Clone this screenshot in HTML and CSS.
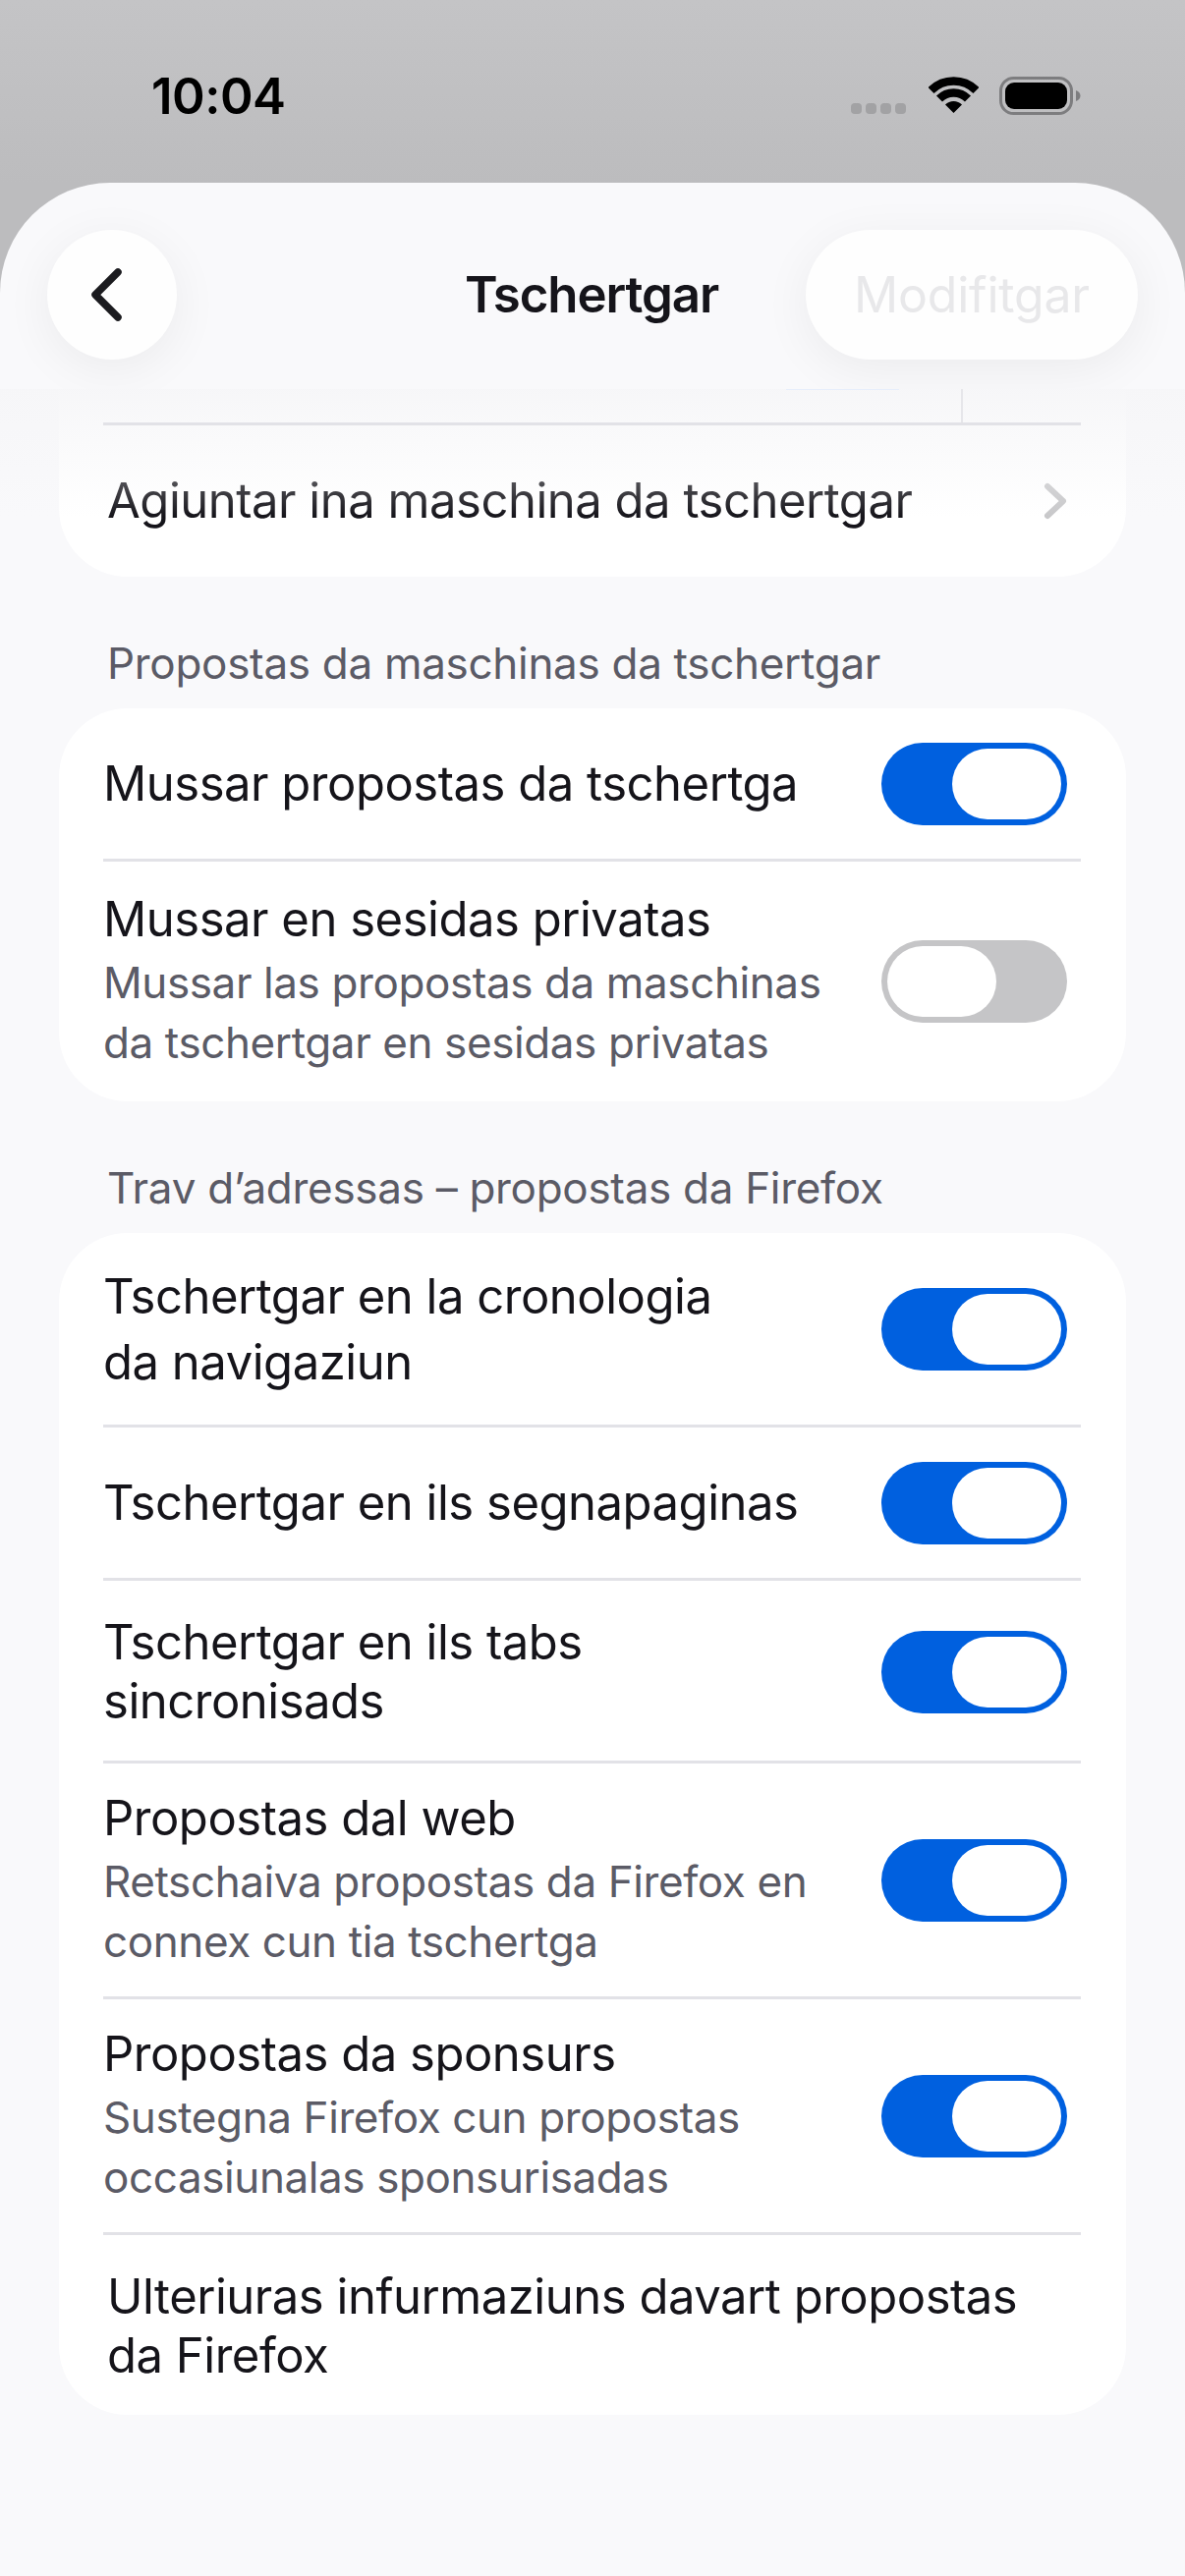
FILE: index.html
```html
<!DOCTYPE html>
<html lang="rm">

<head>
    <meta charset="UTF-8">
    <meta name="viewport" content="width=device-width, initial-scale=1.0">
    <title>Tschertgar</title>
    <link rel="stylesheet" href="styles.css">
</head>

<body>
    <div class="status">
        <span class="clock">10:04</span>
        <div class="status-icons">
            <div class="signal"><i></i><i></i><i></i><i></i></div>
            <svg class="wifi" viewBox="0 0 51 37" width="51" height="37">
                <path d="M2.500 14A32.500 32.500 0 0 1 48.500 14" fill="none" stroke="#000" stroke-width="8.500"/>
                <path d="M11 22.500A20.500 20.500 0 0 1 40 22.500" fill="none" stroke="#000" stroke-width="8.500"/>
                <path d="M25.500 37L17 28.500A12 12 0 0 1 34 28.500Z" fill="#000"/>
            </svg>
            <svg class="battery" viewBox="0 0 83 39" width="83" height="39">
                <rect x="1.500" y="1.500" width="72" height="36" rx="13" fill="none" stroke="#7d7d7f" stroke-width="3"/>
                <rect x="6" y="6" width="63" height="27" rx="9" fill="#000"/>
                <path d="M78 14C81 15 82.500 17 82.500 19.500C82.500 22 81 24 78 25Z" fill="#7d7d7f"/>
            </svg>
        </div>
    </div>

    <div class="sheet">
        <div class="topbar">
            <button class="back-btn" type="button">
                <svg viewBox="0 0 34 56" width="34" height="56">
                    <path d="M28 5L5 28L28 51" fill="none" stroke="#1b1b1f" stroke-width="7.500" stroke-linecap="round" stroke-linejoin="round"/>
                </svg>
            </button>
            <h1>Tschertgar</h1>
            <button class="edit-btn" type="button">Modifitgar</button>
        </div>

        <div class="scroll">
            <div class="card">
                <div class="cut-row">
                    <span class="cut-blue"></span>
                    <span class="cut-line"></span>
                </div>
                <div class="row row-link row-add">
                    <div class="row-text">Agiuntar ina maschina da tschertgar</div>
                    <svg class="chevron" viewBox="0 0 24 38" width="24" height="38">
                        <path d="M4 4L20 19L4 34" fill="none" stroke="#c8c8ca" stroke-width="6" stroke-linecap="round" stroke-linejoin="round"/>
                    </svg>
                </div>
            </div>

            <div class="section-label">Propostas da maschinas da tschertgar</div>
            <div class="card">
                <div class="row row-one">
                    <div class="row-text">Mussar propostas da tschertga</div>
                    <span class="toggle on"><span class="knob"></span></span>
                </div>
                <div class="row row-sub row-private">
                    <div class="row-text">
                        Mussar en sesidas privatas
                        <div class="row-note">Mussar las propostas da maschinas<br>da tschertgar en sesidas privatas</div>
                    </div>
                    <span class="toggle"><span class="knob"></span></span>
                </div>
            </div>

            <div class="section-label">Trav d’adressas – propostas da Firefox</div>
            <div class="card">
                <div class="row row-history">
                    <div class="row-text">Tschertgar en la cronologia<br>da navigaziun</div>
                    <span class="toggle on"><span class="knob"></span></span>
                </div>
                <div class="row row-one">
                    <div class="row-text">Tschertgar en ils segnapaginas</div>
                    <span class="toggle on"><span class="knob"></span></span>
                </div>
                <div class="row row-two">
                    <div class="row-text">Tschertgar en ils tabs<br>sincronisads</div>
                    <span class="toggle on"><span class="knob"></span></span>
                </div>
                <div class="row row-sub">
                    <div class="row-text">
                        Propostas dal web
                        <div class="row-note">Retschaiva propostas da Firefox en<br>connex cun tia tschertga</div>
                    </div>
                    <span class="toggle on"><span class="knob"></span></span>
                </div>
                <div class="row row-sub">
                    <div class="row-text">
                        Propostas da sponsurs
                        <div class="row-note">Sustegna Firefox cun propostas<br>occasiunalas sponsurisadas</div>
                    </div>
                    <span class="toggle on"><span class="knob"></span></span>
                </div>
                <div class="row row-link row-two">
                    <div class="row-text">Ulteriuras infurmaziuns davart propostas<br>da Firefox</div>
                </div>
            </div>
        </div>
    </div>
</body>

</html>
```

FILE: styles.css
```css
body {
    margin: 0;
    height: 2622px;
    overflow: hidden;
    display: flex;
    flex-direction: column;
    font-family: Inter, "Liberation Sans", sans-serif;
    color: #15141a;
    background: linear-gradient(#c4c4c6, #bcbcbe 186px);
}

/* status bar */
.status {
    height: 186px;
    flex-shrink: 0;
    display: flex;
    justify-content: space-between;
    padding: 68px 106px 0 154px;
    box-sizing: border-box;
}

.clock {
    font-size: 51px;
    font-weight: 600;
    line-height: 60px;
    color: #000;
    letter-spacing: -0.5px;
}

.status-icons {
    display: flex;
    align-items: flex-start;
    padding-top: 10px;
}

.signal {
    display: flex;
    gap: 4px;
    margin: 27px 23px 0 0;
}

.signal i {
    width: 11px;
    height: 11px;
    border-radius: 4px;
    background: #a2a2a4;
}

.battery {
    margin-left: 21px;
}

/* sheet */
.sheet {
    flex: 1;
    display: flex;
    flex-direction: column;
    background: #f9f9fb;
    border-radius: 112px 112px 0 0;
    overflow: hidden;
}

.topbar {
    height: 210px;
    flex-shrink: 0;
    display: grid;
    grid-template-columns: 1fr auto 1fr;
    align-items: start;
    padding: 48px 48px 0;
    box-sizing: border-box;
    overflow: hidden;
}

.topbar h1 {
    margin: 0 2px 0 0;
    font-size: 51px;
    font-weight: 600;
    line-height: 132px;
    letter-spacing: -1.1px;
}

.back-btn,
.edit-btn {
    height: 132px;
    border: none;
    background: #fefefe;
    box-shadow: 0 10px 50px rgba(0, 0, 0, 0.06);
    font-family: inherit;
}

.back-btn {
    width: 132px;
    border-radius: 50%;
    padding: 0 11px 0 0;
    display: flex;
    align-items: center;
    justify-content: center;
}

.edit-btn {
    width: 338px;
    justify-self: end;
    border-radius: 66px;
    padding: 0;
    font-size: 50px;
    letter-spacing: -0.2px;
    color: #e8e8ea;
}

/* list */
.scroll {
    flex: 1;
    position: relative;
    padding: 0 60px;
    overflow: hidden;
}

.scroll::before {
    content: "";
    position: absolute;
    top: 0;
    left: 0;
    right: 0;
    height: 130px;
    background: linear-gradient(rgba(246, 246, 248, 0.95), rgba(249, 249, 251, 0));
}

.card {
    background: #fff;
    border-radius: 70px;
}

.card:first-child {
    border-radius: 0 0 70px 70px;
}

.section-label {
    margin: 58px 49px 16px;
    font-size: 44px;
    line-height: 60px;
    letter-spacing: -0.3px;
    color: #5b5b66;
}

.cut-row {
    height: 34px;
    margin: 0 46px 0 45px;
    position: relative;
    border-bottom: 3px solid #e2e2e7;
}

.cut-blue {
    position: absolute;
    top: 0;
    left: 695px;
    width: 115px;
    height: 1px;
    background: #e6eefb;
}

.cut-line {
    position: absolute;
    top: 0;
    bottom: 0;
    left: 873px;
    width: 2px;
    background: #e6e6ea;
}

.row {
    margin: 0 46px 0 45px;
    display: flex;
    align-items: center;
    justify-content: space-between;
    border-bottom: 3px solid #e2e2e7;
    font-size: 49px;
    line-height: 60px;
    letter-spacing: -0.48px;
}

.row:last-child {
    border-bottom: none;
}

.row-link .row-text {
    padding-left: 4px;
}

.row-add {
    height: 154px;
}

.row-one {
    height: 152px;
    padding-top: 1px;
}

.row-two {
    height: 180px;
    padding-top: 3px;
}

.row-history {
    height: 195px;
}

.row-history .row-text {
    line-height: 67px;
}

.row-sub {
    height: 237px;
}

.row-private {
    height: 244px;
}

.row-note {
    margin-top: 4px;
    font-size: 44px;
    line-height: 61px;
    letter-spacing: -0.4px;
    color: #5b5b66;
}

.chevron {
    margin-right: 14px;
}

/* switches */
.toggle {
    width: 189px;
    height: 84px;
    margin-right: 14px;
    padding: 6px;
    box-sizing: border-box;
    border-radius: 42px;
    background: #c5c5c7;
    display: flex;
    flex-shrink: 0;
}

.toggle.on {
    background: #0060df;
    justify-content: flex-end;
}

.knob {
    width: 111px;
    height: 72px;
    border-radius: 36px;
    background: #fff;
}
```
